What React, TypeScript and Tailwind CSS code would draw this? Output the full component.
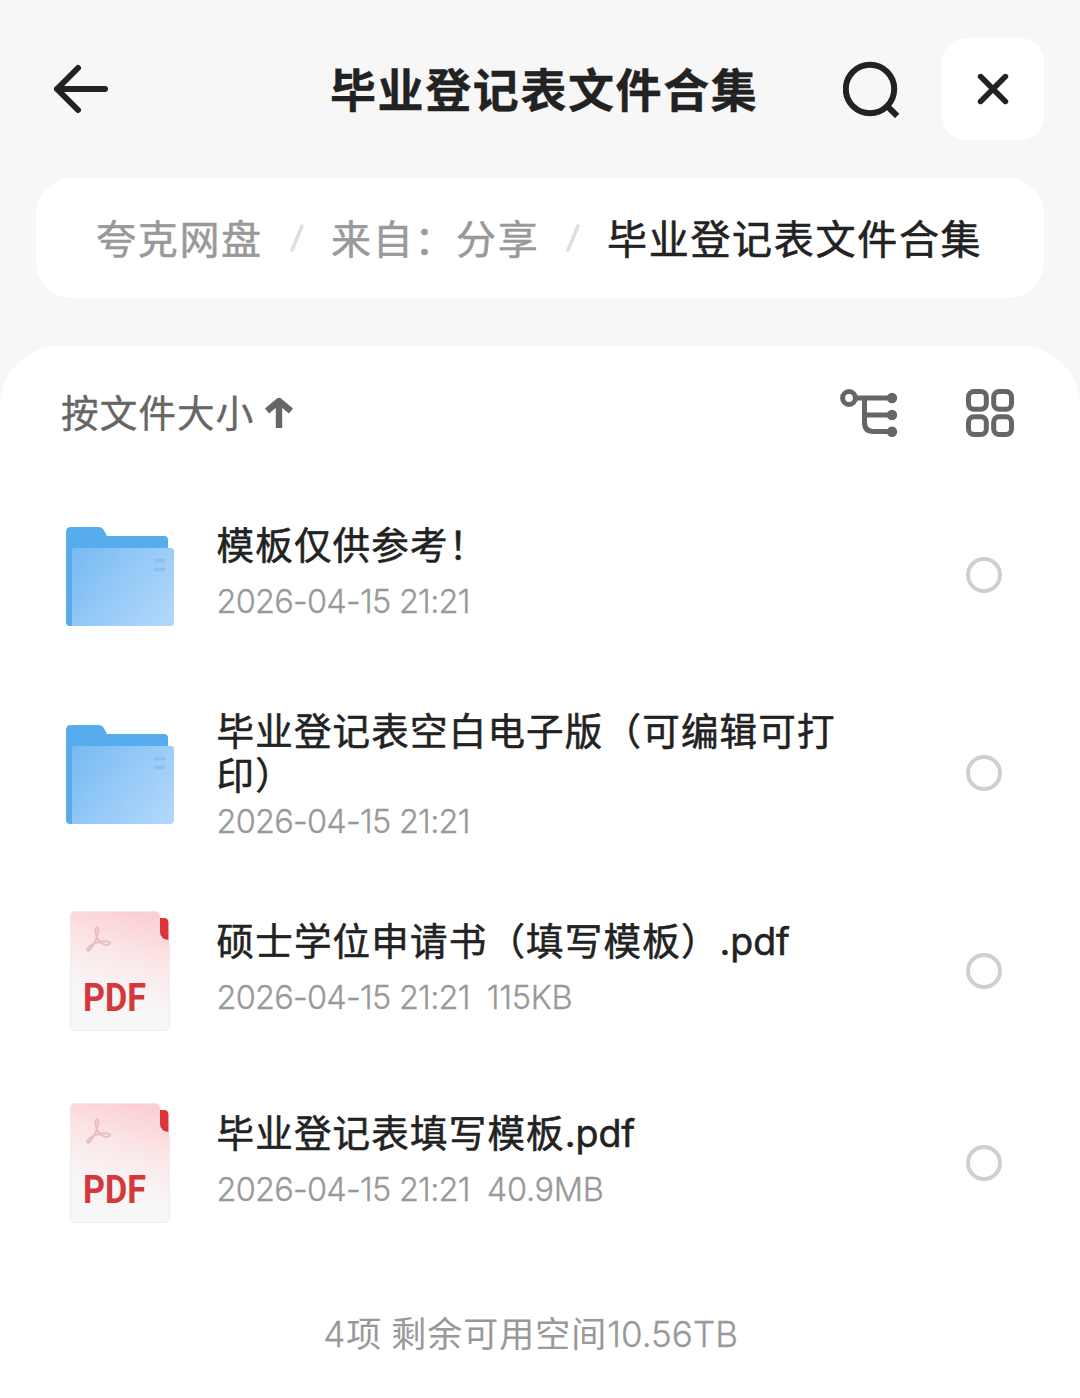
import { useId } from "react";

type FileItem = {
  kind: "folder" | "pdf";
  name: string;
  ext?: string;
  date: string;
  size?: string;
  tall?: boolean;
};

const files: FileItem[] = [
  { kind: "folder", name: "模板仅供参考！", date: "2026-04-15 21:21" },
  { kind: "folder", name: "毕业登记表空白电子版（可编辑可打印）", date: "2026-04-15 21:21", tall: true },
  { kind: "pdf", name: "硕士学位申请书（填写模板）", ext: ".pdf", date: "2026-04-15 21:21", size: "115KB" },
  { kind: "pdf", name: "毕业登记表填写模板", ext: ".pdf", date: "2026-04-15 21:21", size: "40.9MB" },
];

function BackIcon() {
  return (
    <svg width="56" height="52" viewBox="0 0 56 52" fill="none" stroke="#222" strokeWidth="6" strokeLinecap="round" strokeLinejoin="round">
      <path d="M52 26H4M25 5L4 26L25 47" />
    </svg>
  );
}

function SearchIcon() {
  return (
    <svg width="58" height="58" viewBox="0 0 58 58" fill="none" stroke="#222" strokeWidth="6">
      <circle cx="27" cy="29" r="24.2" />
      <path d="M43 45L54.2 56" />
    </svg>
  );
}

function CloseIcon() {
  return (
    <svg width="32" height="32" viewBox="0 0 32 32" fill="none" stroke="#222" strokeWidth="5.6" strokeLinecap="round">
      <path d="M3.6 3.6L28.4 28.4M28.4 3.6L3.6 28.4" />
    </svg>
  );
}

function TreeIcon() {
  return (
    <svg width="58" height="48" viewBox="0 0 58 48" fill="none" stroke="#666" strokeWidth="5">
      <circle cx="9" cy="9" r="6.4" />
      <path d="M16 9H52M24.5 9V33.5Q24.5 42.5 33.5 42.5H52M24.5 26H52" />
      <g fill="#666" stroke="none">
        <circle cx="52" cy="9" r="5.2" />
        <circle cx="52" cy="26" r="5.2" />
        <circle cx="52" cy="42.7" r="5.2" />
      </g>
    </svg>
  );
}

function GridIcon() {
  return (
    <svg width="48" height="48" viewBox="0 0 48 48" fill="none" stroke="#666" strokeWidth="5">
      <rect x="2.5" y="2.5" width="17.8" height="17.8" rx="5.5" />
      <rect x="27.7" y="2.5" width="17.8" height="17.8" rx="5.5" />
      <rect x="2.5" y="27.7" width="17.8" height="17.8" rx="5.5" />
      <rect x="27.7" y="27.7" width="17.8" height="17.8" rx="5.5" />
    </svg>
  );
}

function FolderIcon() {
  const id = useId();
  return (
    <svg width="108" height="100" viewBox="0 0 108 100">
      <defs>
        <linearGradient id={id} x1="0" y1="0.2" x2="1" y2="0.8">
          <stop offset="0" stopColor="#7bbcf3" />
          <stop offset="0.45" stopColor="#94c9f7" />
          <stop offset="1" stopColor="#b0d6fc" />
        </linearGradient>
      </defs>
      <path d="M0 5Q0 0 5 0H33Q36 0 37.5 2.5L41 9H98Q102 9 102 13V60L20 99H4Q0 99 0 95Z" fill="#57acee" />
      <path d="M6 24Q6 21 9 21H105Q108 21 108 24V95Q108 99 104 99H6Z" fill={`url(#${id})`} />
      <path d="M88 33.5H99M88 42.5H99" stroke="#8dc0f0" strokeWidth="3.5" />
    </svg>
  );
}

function PdfIcon() {
  const id = useId();
  return (
    <svg width="100" height="120" viewBox="0 0 100 120">
      <defs>
        <linearGradient id={id} x1="0.65" y1="0" x2="0.4" y2="1">
          <stop offset="0" stopColor="#fbcfd2" />
          <stop offset="0.35" stopColor="#fbe6e7" />
          <stop offset="0.7" stopColor="#f8f5f6" />
          <stop offset="1" stopColor="#f6f8f9" />
        </linearGradient>
      </defs>
      <path
        d="M5 0.5H85Q90 0.5 90 5V24Q90 28 94 28.5H99.5V115Q99.5 119.5 95 119.5H5Q0.5 119.5 0.5 115V5Q0.5 0.5 5 0.5Z"
        fill={`url(#${id})`}
        stroke="#f0e6e8"
        strokeWidth="0.8"
      />
      <path d="M90 7H94Q98.5 7 98.5 12V29Q90 28 90 21Z" fill="#dc3438" />
      <path
        d="M26 17C24 20 27 27 29 30C32 34 38 35 40 32.5C41 30 34 30 29 31C24 32 19 35 17 38.5C17 41 20 39 22 36C25 32 28 24 28.5 19C28.5 16 27 16 26 17Z"
        fill="none"
        stroke="#ebbcc5"
        strokeWidth="2"
        strokeLinejoin="round"
      />
      <text x="13" y="100" fontFamily="Roboto" fontSize="39.5" fontWeight="700" fill="#d4373c" textLength="63" lengthAdjust="spacingAndGlyphs">
        PDF
      </text>
    </svg>
  );
}

function Slash() {
  return (
    <svg width="14" height="28" viewBox="0 0 14 28" className="mb-[3px] shrink-0">
      <path d="M12 2L2 26" stroke="#dedede" strokeWidth="3.5" strokeLinecap="round" />
    </svg>
  );
}

function FileRow({ file }: { file: FileItem }) {
  return (
    <li className={`flex items-center pr-[78px] pl-[66px] ${file.tall ? "h-[204px]" : "h-[192px]"}`}>
      <div className="w-[108px] shrink-0">
        {file.kind === "folder" ? (
          <div className="pt-1">
            <FolderIcon />
          </div>
        ) : (
          <div className="pl-1">
            <PdfIcon />
          </div>
        )}
      </div>
      <div className={`ml-[42.5px] w-[640px] ${file.tall ? "pt-[7px]" : "pb-[3px]"}`}>
        <div className="text-[37.5px] leading-[44px] tracking-[1.2px] text-[#222] [-webkit-text-stroke:0.55px_#222]">
          {file.name}
          {file.ext && <span className="tracking-[-0.1px]">{file.ext}</span>}
        </div>
        <div
          className={`flex gap-[17px] text-[32.5px] leading-[44px] font-light tracking-[-0.75px] text-[#999] [-webkit-text-stroke:0.3px_#999] ${file.tall ? "mt-0.5" : "mt-3"}`}
        >
          <span>{file.date}</span>
          {file.size && <span className="tracking-[-0.3px]">{file.size}</span>}
        </div>
      </div>
      <div className="ml-auto size-9 shrink-0 rounded-full border-4 border-[#cfcfcf]" />
    </li>
  );
}

export default function App() {
  return (
    <div className="flex h-[1398px] w-[1080px] flex-col overflow-hidden bg-[#f7f7f7] font-[Inter,'Noto_Sans_CJK_SC',sans-serif]">
      <header className="flex h-[178px] shrink-0 items-center pr-9 pl-[53px]">
        <BackIcon />
        <h1 className="ml-[221px] w-[513px] pt-px text-[46px] leading-[60px] font-bold tracking-[1.6px] whitespace-nowrap text-[#222] [-webkit-text-stroke:0.4px_#222]">
          毕业登记表文件合集
        </h1>
        <SearchIcon />
        <button className="ml-auto flex size-[102px] items-center justify-center rounded-[24px] bg-white">
          <CloseIcon />
        </button>
      </header>

      <nav className="mx-9 flex h-[120px] shrink-0 items-center rounded-[36px] bg-white pt-[3px] pl-[60px] text-[40px] leading-[56px] tracking-[1.7px] whitespace-nowrap text-[#999]">
        <span className="w-[194px] [-webkit-text-stroke:0.5px_#999]">夸克网盘</span>
        <Slash />
        <span className="ml-[27px] w-[235px] [-webkit-text-stroke:0.5px_#999]">来自：分享</span>
        <Slash />
        <span className="ml-[27px] text-[#222] [-webkit-text-stroke:0.6px_#222]">毕业登记表文件合集</span>
      </nav>

      <main className="mt-12 flex grow flex-col rounded-t-[60px] bg-white">
        <div className="flex h-[133px] items-center pr-[66px] pl-[61px] text-[#666]">
          <span className="pt-[3px] text-[37.5px] leading-[44px] tracking-[1.2px] [-webkit-text-stroke:0.4px_#666]">按文件大小</span>
          <svg width="28" height="32" viewBox="0 0 28 32" fill="none" stroke="#666" strokeWidth="6.4" className="ml-2.5">
            <path d="M14 31V4M2 14L14 4L26 14" strokeLinejoin="round" />
          </svg>
          <div className="ml-auto flex items-center gap-[68px]">
            <TreeIcon />
            <GridIcon />
          </div>
        </div>

        <ul>
          {files.map((file) => (
            <FileRow key={file.name} file={file} />
          ))}
        </ul>

        <footer className="mt-[51px] flex justify-center gap-[9px] pr-[19px] text-[35px] leading-[48px] tracking-[1px] text-[#999]">
          <span>
            <span className="font-light [-webkit-text-stroke:0.3px_#999]">4</span>项
          </span>
          <span>
            剩余可用空间
            <span className="font-light tracking-[0px] [-webkit-text-stroke:0.3px_#999]">10.56TB</span>
          </span>
        </footer>
      </main>
    </div>
  );
}
